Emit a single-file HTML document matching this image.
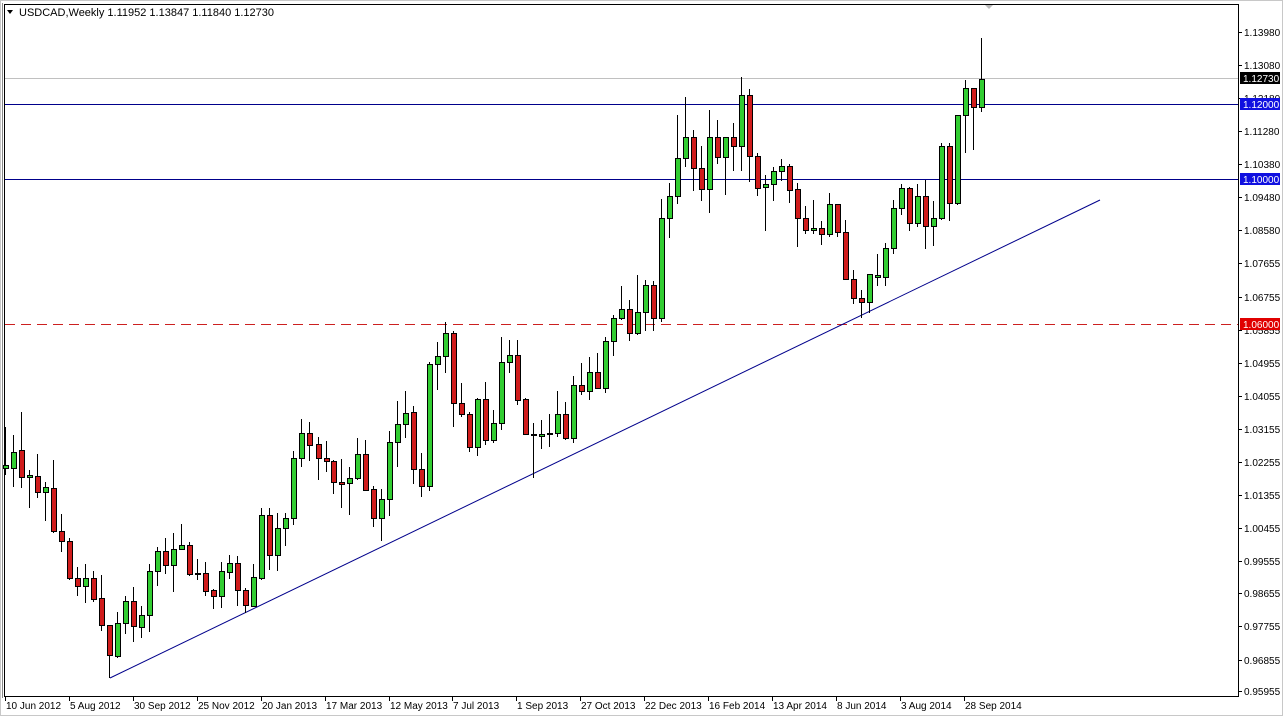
<!DOCTYPE html>
<html><head><meta charset="utf-8"><style>
html,body{margin:0;padding:0;background:#fff;}
svg{display:block;font-family:"Liberation Sans",sans-serif;}
</style></head><body>
<svg id="c" width="1283" height="716" xmlns="http://www.w3.org/2000/svg">
<rect x="0" y="0" width="1283" height="716" fill="#fff"/>
<rect x="0.5" y="0.5" width="1282" height="715" fill="none" stroke="#c8c8c8"/>
<rect x="4.5" y="4.5" width="1234" height="692" fill="#fff" stroke="#000"/>
<line x1="2.5" y1="3" x2="2.5" y2="698" stroke="#888"/>
<polygon points="985,5 993,5 989,9" fill="#bbb"/>
<g id="g"></g>
<text x="19" y="16" font-size="11" fill="#000">USDCAD,Weekly  1.11952 1.13847 1.11840 1.12730</text>
<polygon points="7,10 13,10 10,14" fill="#000"/>
</svg>
<script>
var g=document.getElementById('g'),h='';
function L(x1,y1,x2,y2,c,w,d){h+='<line x1="'+x1+'" y1="'+y1+'" x2="'+x2+'" y2="'+y2+'" stroke="'+c+'" stroke-width="'+(w||1)+'"'+(d?' stroke-dasharray="'+d+'"':'')+'/>';}
L(5,78.5,1238,78.5,'#c0c0c0');
L(5,104.5,1238,104.5,'#00008b');
L(5,179.5,1238,179.5,'#00008b');
L(5,324.5,1238,324.5,'#cc2020',1,'10,6');
L(110,678,1100,200,'#00008b');
var C=[[5,427,465,468,475,'g'],
[13,435,468,452,487,'g'],[21,412,450,477,488,'r'],[29,470,477,475,508,'g'],[37,454,476,492,498,'r'],[45,482,492,487,521,'g'],[53,460,488,531,533,'r'],[61,514,531,541,552,'r'],[69,538,541,578,580,'r'],[77,567,578,586,596,'r'],[85,564,586,578,603,'g'],[93,571,578,599,602,'r'],[101,575,598,625,631,'r'],[109,625,625,655,678,'r'],[117,612,656,623,658,'g'],[125,596,623,601,634,'g'],[133,587,601,626,642,'r'],[141,606,627,615,638,'g'],[149,564,615,571,632,'g'],[157,547,571,551,586,'g'],[165,538,551,565,574,'r'],[173,533,565,549,592,'g'],[181,524,549,545,550,'g'],[189,542,545,574,576,'r'],[197,559,573,574,580,'r'],[205,562,573,591,596,'r'],[213,589,590,596,609,'r'],[221,562,596,571,608,'g'],[229,555,572,563,579,'g'],[237,556,563,590,606,'r'],[245,588,590,605,613,'r'],[253,564,606,577,607,'g'],
[261,508,578,515,580,'g'],[269,508,515,555,570,'r'],[277,513,555,528,571,'g'],[285,513,528,518,546,'g'],[293,451,518,458,525,'g'],[301,419,458,433,467,'g'],[309,422,433,445,461,'r'],[318,437,444,458,480,'r'],[326,441,458,461,472,'r'],[333,460,461,482,494,'r'],[341,459,482,484,508,'r'],[349,467,483,478,515,'g'],[357,438,478,454,480,'g'],[365,440,454,490,490,'r'],[373,486,489,518,527,'r'],[381,489,518,499,541,'g'],[389,431,499,442,516,'g'],[397,401,442,424,467,'g'],[405,391,424,413,438,'g'],[413,406,412,469,484,'r'],[421,453,469,486,497,'r'],[429,362,486,364,491,'g'],[437,342,364,356,390,'g'],[445,322,356,333,373,'g'],[453,331,333,403,427,'r'],[461,383,403,414,417,'r'],[469,412,414,447,452,'r'],[477,398,447,399,456,'g'],[485,382,399,440,445,'r'],[493,410,440,423,443,'g'],[501,337,423,362,430,'g'],[509,340,362,355,373,'g'],
[517,340,355,400,405,'r'],[525,398,399,434,435,'r'],[533,423,434,435,478,'r'],[541,420,436,434,449,'g'],[549,414,433,434,447,'r'],[557,391,433,414,437,'g'],[565,402,414,438,440,'r'],[573,376,438,385,443,'g'],[581,363,385,391,395,'r'],[589,357,391,372,400,'g'],[597,353,372,388,388,'r'],[605,337,388,341,393,'g'],[613,315,341,318,356,'g'],[621,286,318,309,320,'g'],[629,300,309,333,341,'r'],[637,275,333,312,335,'g'],[645,280,312,285,331,'g'],[653,281,285,318,331,'r'],[661,199,318,218,322,'g'],[669,183,218,196,238,'g'],[677,115,196,158,204,'g'],[685,97,158,137,167,'g'],[693,130,137,168,191,'r'],[701,146,168,189,201,'r'],[709,110,189,137,213,'g'],[717,120,137,157,164,'r'],[725,137,157,137,195,'g'],[733,123,137,146,171,'r'],[741,77,146,95,171,'g'],[749,89,95,156,182,'r'],
[757,153,156,188,196,'r'],[765,175,187,184,231,'g'],[773,167,184,171,201,'g'],[781,159,171,166,181,'g'],[789,164,166,190,203,'r'],[797,183,189,218,247,'r'],[805,206,218,230,234,'r'],[813,200,230,228,234,'g'],[821,221,228,234,245,'r'],[829,193,234,204,237,'g'],[837,204,204,232,237,'r'],[845,220,232,279,280,'r'],[853,270,279,298,304,'r'],[861,290,298,302,318,'r'],[869,274,302,274,313,'g'],[877,254,277,275,286,'g'],[885,243,277,248,286,'g'],[893,200,248,208,254,'g'],[901,184,208,188,215,'g'],[909,187,188,223,231,'r'],[917,184,223,196,227,'g'],[925,180,196,226,249,'r'],[933,201,226,218,246,'g'],[941,143,218,146,220,'g'],[949,143,146,203,221,'r'],[957,115,203,115,205,'g'],[965,80,115,88,153,'g'],[973,88,88,107,150,'r'],[981,38,107,79,112,'g']];
C.forEach(function(c){var x=c[0]+.5;L(x,c[1],x,c[4],'#000');var t=Math.min(c[2],c[3]),b=Math.max(c[2],c[3]);if(b-t<1)b=t+1;
h+='<rect x="'+(c[0]-2+.5)+'" y="'+(t+.5)+'" width="5" height="'+(b-t)+'" fill="'+(c[5]=='g'?'#32cd32':'#d01c1c')+'" stroke="#000"/>';});
var P=[['1.13980',32],['1.13080',65],['1.12180',98],['1.11280',131],['1.10380',164],['1.09480',197],['1.08580',230],['1.07655',263],['1.06755',297],['1.05855',330],['1.04955',363],['1.04055',396],['1.03155',429],['1.02255',462],['1.01355',495],['1.00455',528],['0.99555',561],['0.98655',593],['0.97755',626],['0.96855',660],['0.95955',691]];
P.forEach(function(p){L(1239,p[1]+.5,1242,p[1]+.5,'#000');h+='<text x="1244" y="'+(p[1]+4)+'" font-size="10" fill="#000">'+p[0]+'</text>';});
function tag(y,bg,fg,t){h+='<rect x="1240" y="'+(y-6)+'" width="40" height="12" fill="'+bg+'"/><text x="1243" y="'+(y+4)+'" font-size="10" fill="'+fg+'">'+t+'</text>';}
tag(78,'#000','#fff','1.12730');tag(104,'#1010e0','#fff','1.12000');tag(179,'#1010e0','#fff','1.10000');tag(324,'#e00000','#fff','1.06000');
var D=[['10 Jun 2012',5],['5 Aug 2012',69],['30 Sep 2012',133],['25 Nov 2012',197],['20 Jan 2013',261],['17 Mar 2013',325],['12 May 2013',389],['7 Jul 2013',452],['1 Sep 2013',516],['27 Oct 2013',580],['22 Dec 2013',644],['16 Feb 2014',708],['13 Apr 2014',772],['8 Jun 2014',836],['3 Aug 2014',900],['28 Sep 2014',964]];
D.forEach(function(d){L(d[1]+.5,697,d[1]+.5,701,'#000');h+='<text x="'+(d[1]+1)+'" y="709" font-size="10" fill="#000">'+d[0]+'</text>';});
g.innerHTML=h;
</script>
</body></html>
